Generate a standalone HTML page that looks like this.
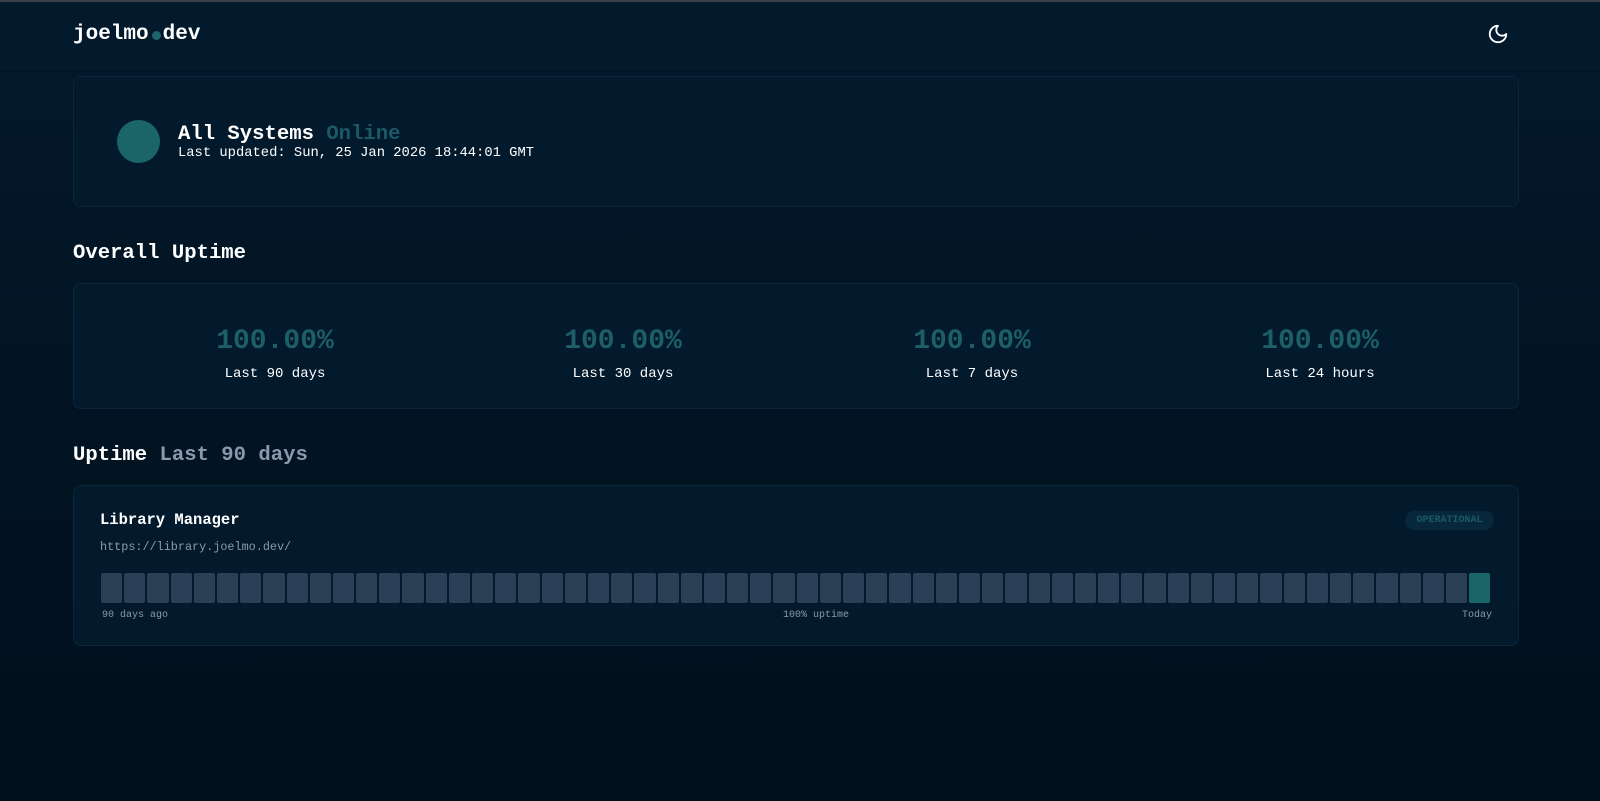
<!DOCTYPE html>
<html><head><meta charset="utf-8"><style>
*{box-sizing:border-box;margin:0;padding:0}
body{width:1600px;height:801px;overflow:hidden;background:linear-gradient(#03192b,#020f1c);font-family:"Liberation Mono",monospace;color:#fff;position:relative}
.top{position:absolute;left:0;top:0;width:1600px;height:2px;background:#3a4048}
.hdr{position:absolute;left:0;top:2px;width:1600px;height:66px;background:#031a2d;border-bottom:1px solid #07202f}
.logo{position:absolute;left:73px;top:21px;font-size:21px;font-weight:bold}
.logo .d{display:inline-block;width:9px;height:9px;border-radius:50%;background:#1b6468;margin:0 2px 0 3px;vertical-align:-1px}
.card{position:absolute;left:73px;width:1446px;background:#031a2d;border:1px solid #0c2639;border-radius:8px}
.h2{position:absolute;left:73px;font-size:20.6px;font-weight:bold}
.pct{position:absolute;text-align:center;width:300px}
.pct .v{font-size:28px;font-weight:bold;color:#1c5f68}
.pct .l{font-size:14px;margin-top:9px}
.bars{position:absolute;left:27px;top:87px;display:flex;gap:2px}
.bars div{width:21.2px;height:30px;background:#2a3e55;border-radius:2px}
.sm{position:absolute;font-size:10px;color:#8a9aac}
</style></head><body>
<div class="top"></div>
<div class="hdr"><div class="logo">joelmo<span class="d"></span>dev</div>
<svg style="position:absolute;left:1487px;top:21px" width="22" height="22" viewBox="0 0 24 24" fill="none" stroke="#fff" stroke-width="2" stroke-linecap="round" stroke-linejoin="round"><path d="M12 3a6 6 0 0 0 9 9 9 9 0 1 1-9-9z"/></svg>
</div>
<div class="card" style="top:76px;height:131px">
<div style="position:absolute;left:43px;top:43px;width:43px;height:43px;border-radius:50%;background:#1b6468"></div>
<div style="position:absolute;left:104px;top:46px;font-size:20.6px;font-weight:bold">All Systems <span style="color:#1b5a66">Online</span></div>
<div style="position:absolute;left:104px;top:69px;font-size:13.8px">Last updated: Sun, 25 Jan 2026 18:44:01 GMT</div>
</div>
<div class="h2" style="top:242px">Overall Uptime</div>
<div class="card" style="top:283px;height:126px">
<div class="pct" style="left:51px;top:42px"><div class="v">100.00%</div><div class="l">Last 90 days</div></div>
<div class="pct" style="left:399px;top:42px"><div class="v">100.00%</div><div class="l">Last 30 days</div></div>
<div class="pct" style="left:748px;top:42px"><div class="v">100.00%</div><div class="l">Last 7 days</div></div>
<div class="pct" style="left:1096px;top:42px"><div class="v">100.00%</div><div class="l">Last 24 hours</div></div>
</div>
<div class="h2" style="top:444px">Uptime <span style="color:#8c98ae">Last 90 days</span></div>
<div class="card" style="top:485px;height:161px">
<div style="position:absolute;left:26px;top:25px;font-size:15.5px;font-weight:bold">Library Manager</div>
<div style="position:absolute;left:26px;top:54px;font-size:11.8px;color:#8a9aac">https://library.joelmo.dev/</div>
<div style="position:absolute;left:1331px;top:25px;width:89px;height:19px;border-radius:10px;background:#07283a;color:#1a5a64;font-size:10px;font-weight:bold;text-align:center;line-height:19px">OPERATIONAL</div>
<div class="bars" id="b"></div>
<div class="sm" style="left:28px;top:124px">90 days ago</div>
<div class="sm" style="left:709px;top:124px">100% uptime</div>
<div class="sm" style="left:1388px;top:124px">Today</div>
</div>
<script>
var b=document.getElementById('b');for(var i=0;i<60;i++){var d=document.createElement('div');if(i==59)d.style.background='#1b6468';b.appendChild(d);}
</script>
</body></html>
